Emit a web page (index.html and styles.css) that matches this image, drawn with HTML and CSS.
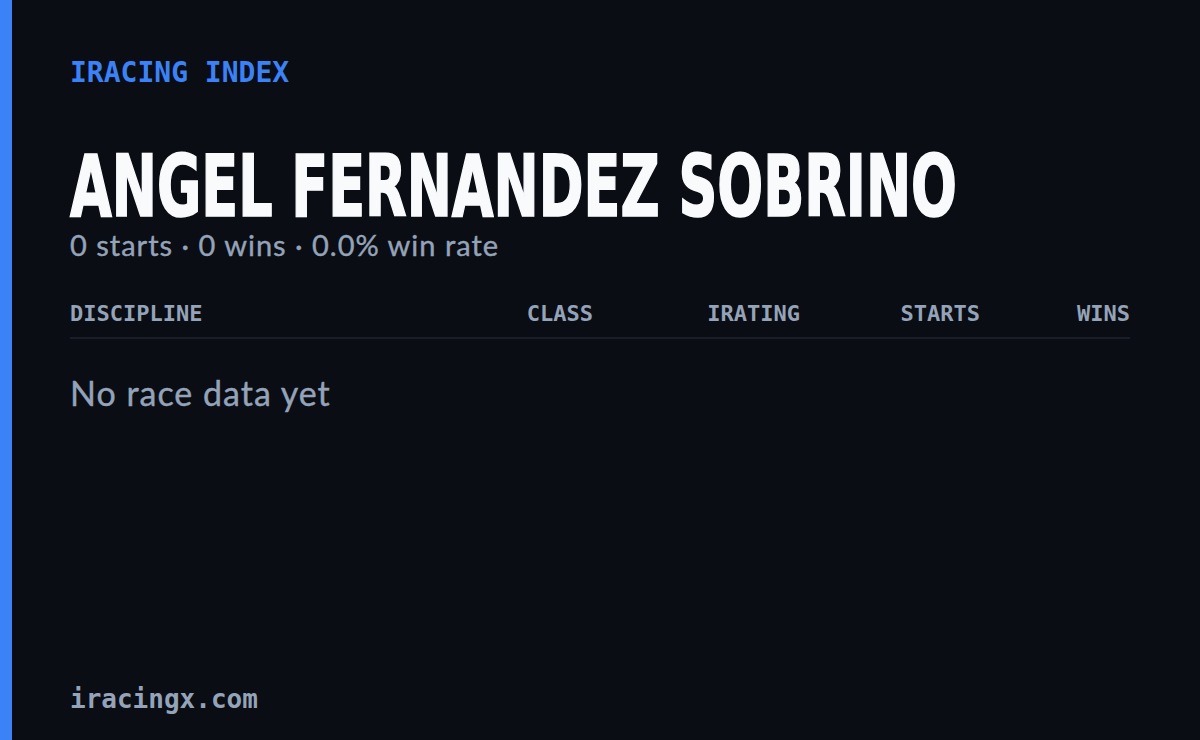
FILE: index.html
```html
<html>
<head>
<link rel="stylesheet" href="styles.css">
</head>
<body>
<div class="card">
  <div class="eyebrow">IRACING INDEX</div>
  <h1 class="name"><span class="name-text">ANGEL FERNANDEZ SOBRINO</span></h1>
  <div class="summary">0 starts · 0 wins · 0.0% win rate</div>

  <div class="table">
    <div class="thead">
      <div class="th">DISCIPLINE</div>
      <div class="th num">CLASS</div>
      <div class="th num">IRATING</div>
      <div class="th num">STARTS</div>
      <div class="th num">WINS</div>
    </div>
    <div class="empty">No race data yet</div>
  </div>

  <div class="footer">iracingx.com</div>
</div>
</body>
</html>
```

FILE: styles.css
```css
body {
  margin: 0;
  background: #0a0d14;
}

.card {
  height: 740px;
  box-sizing: border-box;
  border-left: 12px solid #3b82f6;
  padding: 57px 70px 26px 58px;
  display: flex;
  flex-direction: column;
}

.eyebrow {
  font: bold 28px/32px "DejaVu Sans Mono", monospace;
  color: #3b82f6;
}

/* condensed display face: short font, stretched tall */
.name {
  margin: 81px 0 0 0;
  font: bold 60px/60px "DejaVu Sans Condensed", "DejaVu Sans", sans-serif;
  color: #f8fafc;
  white-space: nowrap;
}

.name-text {
  display: inline-block;
  line-height: 51px;
  transform: scaleY(1.43);
  transform-origin: 0 46.2px;
  -webkit-text-stroke: 1.2px #f8fafc;
}

.summary {
  margin-top: 6px;
  font: 29px/36px Lato, sans-serif;
  letter-spacing: 1px;
  -webkit-text-stroke: 0.4px #94a3b8;
  color: #94a3b8;
}

.table {
  margin-top: 38px;
}

.thead {
  display: grid;
  grid-template-columns: 1fr 140px 207px 180px 150px;
  padding-bottom: 10px;
  border-bottom: 2px solid #1a1e28;
}

.th {
  font: bold 22px/26px "DejaVu Sans Mono", monospace;
  color: #94a3b8;
}

.th.num {
  text-align: right;
}

.empty {
  margin-top: 34px;
  font: 34px/40px Lato, sans-serif;
  letter-spacing: 1px;
  -webkit-text-stroke: 0.4px #94a3b8;
  color: #94a3b8;
}

.footer {
  margin-top: auto;
  font: bold 26px/30px "DejaVu Sans Mono", monospace;
  color: #94a3b8;
}
```
